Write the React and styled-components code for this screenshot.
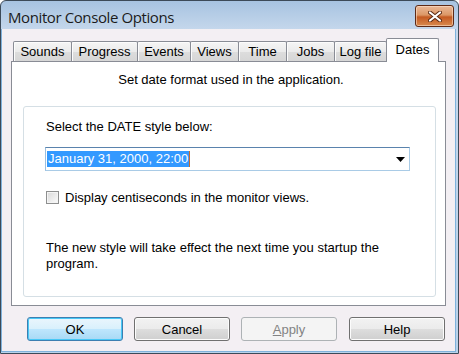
import styled, { createGlobalStyle } from "styled-components"

const GlobalStyle = createGlobalStyle`
  html, body {
    margin: 0;
    padding: 0;
    background: #ffffff;
  }
  * {
    box-sizing: border-box;
  }
`

const TABS = [
  { label: "Sounds", width: 59 },
  { label: "Progress", width: 67 },
  { label: "Events", width: 54 },
  { label: "Views", width: 49 },
  { label: "Time", width: 49 },
  { label: "Jobs", width: 49 },
  { label: "Log file", width: 53 },
  { label: "Dates", width: 53, active: true },
]

const BUTTONS = [
  { label: "OK", kind: "default" },
  { label: "Cancel" },
  { label: "Apply", kind: "disabled", hotkey: true },
  { label: "Help" },
]

const Window = styled.div`
  width: 459px;
  height: 354px;
  display: flex;
  flex-direction: column;
  border: 1px solid #3c4a58;
  border-radius: 6px 6px 0 0;
  background: linear-gradient(#a7c3e1, #c6d8ec 30px, #b9d2ea);
  overflow: hidden;
`

const TitleBar = styled.div`
  height: 28px;
  flex: none;
  display: flex;
  align-items: flex-start;
  justify-content: space-between;
  padding: 4px 4px 0 7px;
`

const Title = styled.div`
  font-family: "Open Sans", "Noto Sans", sans-serif;
  font-size: 15px;
  letter-spacing: -0.4px;
  line-height: 20px;
  color: #1b1b1b;
  padding-top: 2px;
`

const CloseButton = styled.div`
  width: 39px;
  height: 22px;
  border: 1px solid #5e2a16;
  border-radius: 3px;
  background: linear-gradient(#eab998, #dc9766 45%, #c45a22 55%, #d98a4e);
  box-shadow: inset 0 0 0 1px rgba(255, 230, 210, 0.55);
  display: flex;
  align-items: center;
  justify-content: center;
`

const Client = styled.div`
  flex: 1;
  margin: 0 2px 1px 0;
  border: 1px solid #7fb2dc;
  border-top: none;
  background: #f3eff3;
  padding: 9px 0 0 9px;
  display: flex;
  flex-direction: column;
`

const TabStrip = styled.div`
  height: 23px;
  display: flex;
  align-items: flex-end;
  padding-left: 2px;
  position: relative;
  z-index: 2;
`

const Tab = styled.div`
  width: ${(p) => p.$w}px;
  height: ${(p) => (p.$active ? 24 : 20)}px;
  margin-left: -1px;
  margin-bottom: ${(p) => (p.$active ? -1 : 0)}px;
  border: 1px solid #898c95;
  border-bottom: none;
  border-radius: 2px 2px 0 0;
  background: ${(p) =>
    p.$active ? "#ffffff" : "linear-gradient(#f5f5f5, #ebebeb 50%, #dddddd 51%, #d6d6d6)"};
  box-shadow: ${(p) => (p.$active ? "none" : "inset 1px 1px 0 #fcfcfc")};
  display: flex;
  justify-content: center;
  padding-top: ${(p) => (p.$active ? 3 : 2)}px;
  font-family: "Liberation Sans", Arial, sans-serif;
  font-size: 13px;
  line-height: 15px;
  color: #000;

  &:first-child {
    margin-left: 0;
  }
`

const Panel = styled.div`
  width: 435px;
  height: 245px;
  background: #ffffff;
  border: 1px solid #898c95;
  display: flex;
  flex-direction: column;
  padding: 10px 9px 8px 11px;
`

const Heading = styled.div`
  font-family: "Liberation Sans", Arial, sans-serif;
  font-size: 13px;
  line-height: 15px;
  color: #000;
  text-align: center;
  padding-left: 3px;
`

const GroupBox = styled.div`
  flex: 1;
  margin-top: 19px;
  border: 1px solid #d5dfe5;
  border-radius: 3px;
  padding: 12px 0 0 21px;
  display: flex;
  flex-direction: column;
  align-items: flex-start;
`

const Label = styled.div`
  font-family: "Liberation Sans", Arial, sans-serif;
  font-size: 13px;
  line-height: ${(p) => p.$lh || 15}px;
  color: #000;
  margin-top: ${(p) => p.$mt || 0}px;
  margin-left: ${(p) => p.$ml || 0}px;
`

const Combo = styled.div`
  width: 365px;
  height: 24px;
  margin-top: 13px;
  border: 1px solid #a9cbe6;
  border-top-color: #5a83ad;
  border-left-color: #9bbfdf;
  background: #ffffff;
  display: flex;
  align-items: center;
  justify-content: space-between;
  padding: 0 4px 0 1px;
`

const Selection = styled.span`
  font-family: "Liberation Sans", Arial, sans-serif;
  font-size: 13px;
  line-height: 16px;
  height: 16px;
  padding: 0 1px 0 1px;
  background: #3399ff;
  color: #ffffff;
  border-right: 1px solid #c46a30;
`

const CheckRow = styled.div`
  display: flex;
  align-items: center;
  margin-top: 19px;
  margin-left: 1px;
`

const CheckBox = styled.div`
  width: 13px;
  height: 13px;
  border: 1px solid #8e8f8f;
  background: linear-gradient(135deg, #d9d9d9, #f1f1f1 70%, #fbfbfb);
  box-shadow: inset 0 0 0 1px #f4f4f4;
  margin-right: 6px;
`

const ButtonRow = styled.div`
  display: flex;
  gap: 11px;
  padding: 11px 0 0 16px;
`

const Button = styled.div`
  width: 96px;
  height: 24px;
  border-radius: 3px;
  display: flex;
  align-items: center;
  justify-content: center;
  font-family: "Liberation Sans", Arial, sans-serif;
  font-size: 13px;
  color: ${(p) => (p.$kind === "disabled" ? "#838383" : "#000")};
  border: 1px solid
    ${(p) => (p.$kind === "default" ? "#3c7fb1" : p.$kind === "disabled" ? "#adb2b5" : "#707070")};
  background: ${(p) =>
    p.$kind === "default"
      ? "linear-gradient(#eaf6fd, #d9f0fc 50%, #bee6fd 51%, #a7d9f5)"
      : p.$kind === "disabled"
      ? "#f4f4f4"
      : "linear-gradient(#f2f2f2, #ebebeb 50%, #dddddd 51%, #cfcfcf)"};
  box-shadow: ${(p) =>
    p.$kind === "default"
      ? "inset 0 0 0 1px #48c8f6"
      : p.$kind === "disabled"
      ? "none"
      : "inset 0 0 0 1px #fcfcfc"};

  &:last-child {
    margin-left: 1px;
  }
`

const Hotkey = styled.span`
  text-decoration: underline;
`

const CloseGlyph = () => (
  <svg width="14" height="11" viewBox="0 0 14 11">
    <path
      d="M2 1.5 L12 9.5 M12 1.5 L2 9.5"
      stroke="#5a2a14"
      strokeWidth="4"
      strokeLinecap="round"
    />
    <path d="M2 1.5 L12 9.5 M12 1.5 L2 9.5" stroke="#ffffff" strokeWidth="2.2" strokeLinecap="round" />
  </svg>
)

const DropArrow = () => (
  <svg width="9" height="5" viewBox="0 0 9 5">
    <path d="M0 0 H9 L4.5 5 Z" fill="#000" />
  </svg>
)

const App = () => {
  return (
    <>
      <GlobalStyle />
      <Window>
        <TitleBar>
          <Title>Monitor Console Options</Title>
          <CloseButton>
            <CloseGlyph />
          </CloseButton>
        </TitleBar>
        <Client>
          <TabStrip>
            {TABS.map((t) => (
              <Tab key={t.label} $w={t.width} $active={t.active}>
                {t.label}
              </Tab>
            ))}
          </TabStrip>
          <Panel>
            <Heading>Set date format used in the application.</Heading>
            <GroupBox>
              <Label $ml={1}>Select the DATE style below:</Label>
              <Combo>
                <Selection>January 31, 2000, 22:00</Selection>
                <DropArrow />
              </Combo>
              <CheckRow>
                <CheckBox />
                <Label>Display centiseconds in the monitor views.</Label>
              </CheckRow>
              <Label $mt={35} $lh={16} $ml={1}>
                The new style will take effect the next time you startup the
                <br />
                program.
              </Label>
            </GroupBox>
          </Panel>
          <ButtonRow>
            {BUTTONS.map((b) => (
              <Button key={b.label} $kind={b.kind}>
                {b.hotkey ? (
                  <>
                    <Hotkey>{b.label[0]}</Hotkey>
                    {b.label.slice(1)}
                  </>
                ) : (
                  b.label
                )}
              </Button>
            ))}
          </ButtonRow>
        </Client>
      </Window>
    </>
  )
}

export default App
